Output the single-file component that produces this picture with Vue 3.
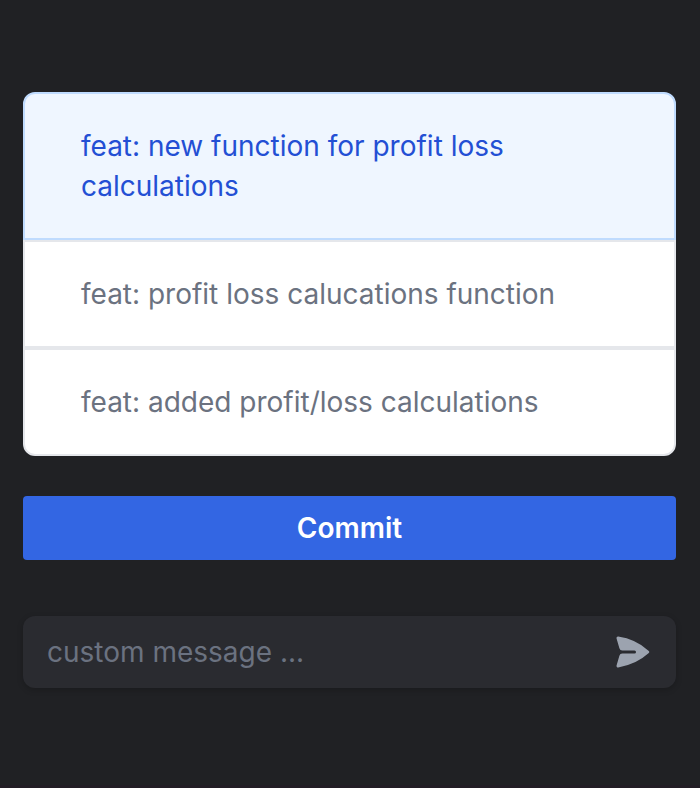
<script setup>
import { ref } from 'vue'

const messages = [
  'feat: new function for profit loss calculations',
  'feat: profit loss calucations function',
  'feat: added profit/loss calculations',
]
const selected = ref(0)
const custom = ref('')
</script>

<template>
  <main class="panel">
    <div class="options" role="radiogroup" aria-label="Commit messages">
      <label v-for="(message, i) in messages" :key="message" class="option" :class="{ active: selected === i }">
        <input v-model="selected" class="radio" type="radio" name="message" :value="i" />
        <span>{{ message }}</span>
      </label>
    </div>
    <button class="commit" type="button">Commit</button>
    <form class="custom" @submit.prevent>
      <input v-model="custom" class="field" type="text" placeholder="custom message ..." aria-label="custom message" />
      <button class="send" type="submit" aria-label="Send">
        <svg width="40" height="40" viewBox="0 0 20 20" fill="currentColor" aria-hidden="true">
          <path d="M3.105 2.289a.75.75 0 00-.826.95l1.414 4.925A1.5 1.5 0 005.135 9.25h6.115a.75.75 0 010 1.5H5.135a1.5 1.5 0 00-1.442 1.086l-1.414 4.926a.75.75 0 00.826.95 28.896 28.896 0 0015.293-7.154.75.75 0 000-1.115A28.897 28.897 0 003.105 2.289z" />
        </svg>
      </button>
    </form>
  </main>
</template>

<style>
body {
  background: #202124;
}
</style>

<style scoped>
.panel {
  box-sizing: border-box;
  min-height: 100vh;
  padding: 92px 24px 96px 23px;
  border-bottom: 3px solid #221d25;
  font-family: Inter, sans-serif;
  font-size: 28px;
  line-height: 40px;
}
.options {
  display: flex;
  flex-direction: column;
}
.option {
  padding: 32px 56px;
  border: 2px solid #e5e7eb;
  background: #fff;
  color: #6b7280;
  cursor: pointer;
}
.option:first-child {
  border-radius: 12px 12px 0 0;
}
.option:last-child {
  border-radius: 0 0 12px 12px;
}
.option.active {
  border-color: #bfdbfe;
  background: #eff6ff;
  color: #234fd4;
}
.radio {
  position: absolute;
  opacity: 0;
  pointer-events: none;
}
.commit {
  display: block;
  width: 100%;
  height: 64px;
  margin-top: 40px;
  padding: 0;
  border: 0;
  border-radius: 4px;
  background: #3366e3;
  color: #fff;
  font: inherit;
  font-weight: 600;
  cursor: pointer;
}
.custom {
  display: flex;
  align-items: center;
  height: 72px;
  margin-top: 56px;
  border-radius: 12px;
  background: #2a2b30;
  box-shadow: 0 2px 6px rgb(0 0 0 / 20%);
}
.field {
  flex: 1;
  min-width: 0;
  padding: 0 24px;
  border: 0;
  outline: 0;
  background: none;
  color: #e5e7eb;
  font: inherit;
}
.field::placeholder {
  color: #6b7280;
  opacity: 1;
}
.send {
  display: flex;
  padding: 0 24px 0 0;
  border: 0;
  background: none;
  color: #9ca3af;
  cursor: pointer;
}
</style>
